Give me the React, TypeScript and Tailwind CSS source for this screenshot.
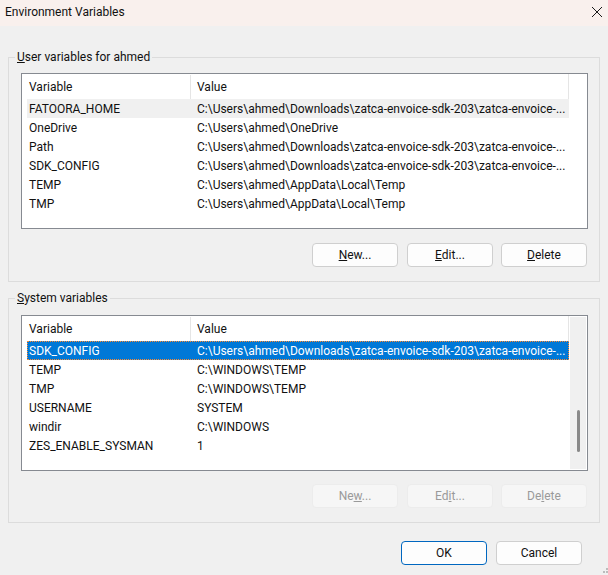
const FONT = "font-['Roboto','Open_Sans',sans-serif]";

const longPath = "C:\\Users\\ahmed\\Downloads\\zatca-envoice-sdk-203\\zatca-envoice-...";

const userVars = [
  ["FATOORA_HOME", longPath],
  ["OneDrive", "C:\\Users\\ahmed\\OneDrive"],
  ["Path", longPath],
  ["SDK_CONFIG", longPath],
  ["TEMP", "C:\\Users\\ahmed\\AppData\\Local\\Temp"],
  ["TMP", "C:\\Users\\ahmed\\AppData\\Local\\Temp"],
];

const systemVars = [
  ["SDK_CONFIG", longPath],
  ["TEMP", "C:\\WINDOWS\\TEMP"],
  ["TMP", "C:\\WINDOWS\\TEMP"],
  ["USERNAME", "SYSTEM"],
  ["windir", "C:\\WINDOWS"],
  ["ZES_ENABLE_SYSMAN", "1"],
];

const Btn = ({ children, disabled, primary, className = "" }: { children: React.ReactNode; disabled?: boolean; primary?: boolean; className?: string }) => (
  <button
    className={`w-[86px] h-6 rounded text-xs flex items-center justify-center ${
      disabled
        ? "bg-[#f6f6f6] border border-[#ececec] text-[#9a9a9a]"
        : primary
        ? "bg-[#fdfdfd] border border-[#0067c0] text-[#111]"
        : "bg-[#fdfdfd] border border-[#cfcfcf] text-[#111]"
    } ${className}`}
  >
    {children}
  </button>
);

const VarList = ({ rows, selected, hovered, scrollbar }: { rows: string[][]; selected?: number; hovered?: number; scrollbar?: boolean }) => (
  <div className="flex h-[156px] border border-[#868a91] bg-white">
    <div className="w-[547px] pl-[5px]">
      <div className="grid grid-cols-[164px_1fr] h-[25px] items-center border-r border-[#e5e5e5] pt-px">
        <span className="pl-[2px] h-full flex items-center border-r border-[#e5e5e5]">Variable</span>
        <span className="pl-[6px]">Value</span>
      </div>
      {rows.map((row, i) => (
        <div
          key={row[0]}
          className={`grid grid-cols-[164px_1fr] h-[18.9px] pt-[2px] items-center whitespace-nowrap ${
            i === selected
              ? "bg-[#0078d7] text-white outline-1 outline-dotted -outline-offset-1 outline-[#ff8a30]"
              : i === hovered
              ? "bg-[#f0f0f0]"
              : ""
          }`}
        >
          <span className="pl-[2px]">{row[0]}</span>
          <span className="pl-[6px]">{row[1]}</span>
        </div>
      ))}
    </div>
    {scrollbar && (
      <div className="w-[16px] my-px ml-auto mr-px bg-[#f0f0f0] pt-[93px]">
        <div className="w-[2.5px] h-[42px] ml-[7px] bg-[#8a8a8a] rounded-full" />
      </div>
    )}
  </div>
);

const Group = ({ title, children }: { title: React.ReactNode; children: React.ReactNode }) => (
  <fieldset className="border border-[#dcdcdc] pl-3 pr-[11px] pb-[14px]">
    <legend className="-ml-[6px] px-[2px] h-4 leading-4">{title}</legend>
    <div className="mt-2">{children}</div>
  </fieldset>
);

export default function App() {
  return (
    <div className={`relative w-[608px] h-[575px] overflow-hidden bg-[#f0f0f0] text-xs text-[#111] ${FONT}`}>
      <div className="h-[26px] pb-[3px] bg-[#f9f0ed] flex items-center justify-between pl-[5px] pr-[6px]">
        <span>Environment Variables</span>
        <svg width="10" height="10" viewBox="0 0 10 10" stroke="#1a1a1a" strokeWidth="1">
          <path d="M0 0L10 10M10 0L0 10" />
        </svg>
      </div>

      <div className="px-2 pt-[23px]">
        <Group title={<><u>U</u>ser variables for ahmed</>}>
          <VarList rows={userVars} hovered={0} />
          <div className="flex justify-end gap-2 mt-[14px] mr-px">
            <Btn><span><u>N</u>ew...</span></Btn>
            <Btn className="ml-px"><span><u>E</u>dit...</span></Btn>
            <Btn><span><u>D</u>elete</span></Btn>
          </div>
        </Group>

        <div className="mt-2">
          <Group title={<><u>S</u>ystem variables</>}>
            <div className="pt-px">
              <VarList rows={systemVars} selected={0} scrollbar />
            </div>
            <div className="flex justify-end gap-2 mt-[13px] mr-px">
              <Btn disabled><span>Ne<u>w</u>...</span></Btn>
              <Btn disabled className="ml-px"><span>Ed<u>i</u>t...</span></Btn>
              <Btn disabled><span>De<u>l</u>ete</span></Btn>
            </div>
          </Group>
        </div>

        <div className="flex justify-end gap-[9px] mt-[18px] pr-[18px]">
          <Btn primary>OK</Btn>
          <Btn>Cancel</Btn>
        </div>
      </div>

      <svg className="absolute right-0 bottom-0" width="6" height="7" viewBox="0 0 6 7" fill="#bcbcbc">
        <rect x="4" y="0" width="2" height="2" />
        <rect x="1" y="3" width="2" height="2" />
        <rect x="4" y="3" width="2" height="2" />
      </svg>
    </div>
  );
}
